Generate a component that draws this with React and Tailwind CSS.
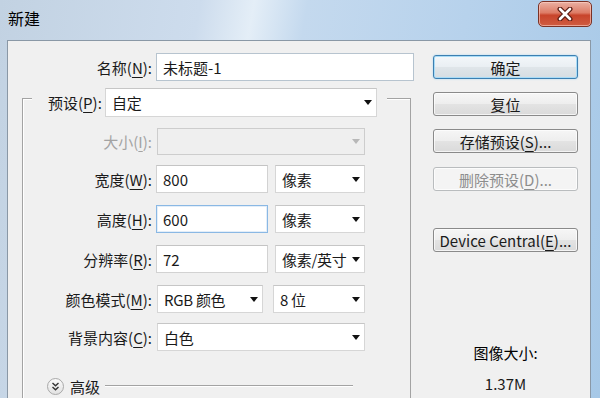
import React from "react";

const font = { fontFamily: '"Noto Sans CJK SC", "Liberation Sans", sans-serif' };

function Mn({ c }) {
  return <span className="underline underline-offset-[3px] decoration-1">{c}</span>;
}

function Arrow({ dim }) {
  return (
    <span
      className={`shrink-0 w-0 h-0 border-l-[4px] border-r-[4px] border-t-[5px] border-l-transparent border-r-transparent ${
        dim ? "border-t-[#b8b8b8]" : "border-t-[#111]"
      }`}
    />
  );
}

function Label({ children, dim, w = "w-[129px]" }) {
  return (
    <div
      className={`${w} shrink-0 text-right text-[15px] leading-none whitespace-nowrap ${
        dim ? "text-[#a3a3a3]" : "text-[#1a1a1a]"
      }`}
    >
      {children}
    </div>
  );
}

function Input({ value, w, focus, blue }) {
  return (
    <div
      className={`${w} h-full bg-white flex items-center pl-[6px] text-[15px] leading-none text-[#1a1a1a] border ${
        focus
          ? "border-[#8ab8e4] shadow-[inset_0_0_0_1px_#e3eef9]"
          : blue
          ? "border-[#b7c4cf]"
          : "border-[#d2d2d2] border-t-[#c4c4c4]"
      }`}
    >
      {value}
    </div>
  );
}

function Select({ value, w, dim }) {
  return (
    <div
      className={`${w} h-full flex items-center justify-between pl-[6px] pr-[4px] text-[15px] leading-none border ${
        dim
          ? "bg-[#efefef] border-[#cdcdcd] text-[#a3a3a3]"
          : "bg-white border-[#d6d6d6] border-t-[#c6c6c6] text-[#1a1a1a]"
      }`}
    >
      <span className="whitespace-nowrap tracking-[-0.3px]">{value}</span>
      <Arrow dim={dim} />
    </div>
  );
}

function Button({ children, primary, disabled, mt }) {
  let look =
    "border-[#8a8a8a] bg-[linear-gradient(180deg,#f6f6f6_0%,#eeeeee_48%,#e3e3e3_52%,#dadada_100%)] text-[#1a1a1a]";
  if (primary)
    look =
      "border-[#3c7fb1] bg-[linear-gradient(180deg,#f3f7fa_0%,#eaeff3_48%,#dfe5e9_52%,#d6dde2_100%)] text-[#1a1a1a] shadow-[inset_0_0_0_1px_#a9dcf7,0_0_2px_#9fd3f3]";
  if (disabled) look = "border-[#b9bcbe] bg-[#f4f4f4] text-[#8d8d8d]";
  return (
    <div
      className={`${mt} w-[145px] h-[24px] rounded-[3px] border flex items-center justify-center text-[15px] leading-none whitespace-nowrap ${
        primary ? "" : "shadow-[inset_0_0_0_1px_rgba(255,255,255,0.7)]"
      } ${look}`}
    >
      {children}
    </div>
  );
}

function Row({ mt, h = "h-[28px]", children }) {
  return <div className={`${mt} ${h} flex items-center`}>{children}</div>;
}

export default function App() {
  return (
    <div
      style={font}
      className="w-[600px] h-[398px] overflow-hidden flex flex-col bg-[linear-gradient(100deg,#c2d2e2_0%,#cddced_30%,#e4eef7_38%,#c4d9ee_46%,#b7d2ec_70%,#a6c8e7_100%)]"
    >
      {/* title bar */}
      <div className="h-[40px] shrink-0 flex items-start justify-between">
        <div className="pl-[8px] pt-[10px] text-[16px] leading-none text-black">新建</div>
        <div className="mr-[8px] mt-[1px] w-[54px] h-[26px] rounded-[5px] border border-[#7a3226] bg-[linear-gradient(180deg,#eab0a3_0%,#dd7c66_45%,#c8442b_55%,#cf5c41_100%)] shadow-[inset_0_0_0_1px_rgba(255,210,200,0.6)] flex items-center justify-center">
          <svg width="16" height="14" viewBox="0 0 16 14">
            <path d="M3 2 L13 12 M13 2 L3 12" stroke="#5a1b12" strokeWidth="5" strokeLinecap="round" />
            <path d="M3 2 L13 12 M13 2 L3 12" stroke="#ffffff" strokeWidth="2.6" strokeLinecap="round" />
          </svg>
        </div>
      </div>

      {/* content */}
      <div className="flex-1 ml-[7px] w-[584px] bg-[#f0f0f0] border-t border-l border-r border-[#8a98a6] flex">
        {/* left column */}
        <div className="w-[412px] shrink-0 flex flex-col">
          <Row mt="mt-[12px]">
            <Label w="w-[144px]">
              名称(<Mn c="N" />):
            </Label>
            <div className="ml-[4px] h-full">
              <Input value="未标题-1" w="w-[258px]" blue />
            </div>
          </Row>

          {/* group box */}
          <div className="mt-[17px] ml-[14px] w-[389px] h-[320px] border-l border-t border-r border-[#a3a3a3] shadow-[inset_1px_1px_0_#ffffff] flex flex-col">
            <div className="-mt-[11px] h-[29px] flex">
              <div className="ml-[9px] pl-[16px] pr-[10px] bg-[#f0f0f0] h-full flex items-center">
                <div className="w-[52px] text-[15px] leading-none whitespace-nowrap text-[#1a1a1a]">
                  预设(<Mn c="P" />):
                </div>
                <div className="ml-[5px] h-full">
                  <Select value="自定" w="w-[272px]" />
                </div>
              </div>
            </div>

            <Row mt="mt-[11px]" h="h-[27px]">
              <Label dim>
                大小(<Mn c="I" />):
              </Label>
              <div className="ml-[5px] h-full">
                <Select value="" w="w-[208px]" dim />
              </div>
            </Row>

            <Row mt="mt-[10px]">
              <Label>
                宽度(<Mn c="W" />):
              </Label>
              <div className="ml-[4px] h-full">
                <Input value="800" w="w-[112px]" />
              </div>
              <div className="ml-[7px] h-full">
                <Select value="像素" w="w-[90px]" />
              </div>
            </Row>

            <Row mt="mt-[12px]">
              <Label>
                高度(<Mn c="H" />):
              </Label>
              <div className="ml-[4px] h-full">
                <Input value="600" w="w-[112px]" focus />
              </div>
              <div className="ml-[7px] h-full">
                <Select value="像素" w="w-[90px]" />
              </div>
            </Row>

            <Row mt="mt-[12px]">
              <Label>
                分辨率(<Mn c="R" />):
              </Label>
              <div className="ml-[4px] h-full">
                <Input value="72" w="w-[112px]" />
              </div>
              <div className="ml-[7px] h-full">
                <Select value="像素/英寸" w="w-[90px]" />
              </div>
            </Row>

            <Row mt="mt-[12px]">
              <Label>
                颜色模式(<Mn c="M" />):
              </Label>
              <div className="ml-[5px] h-full">
                <Select value="RGB 颜色" w="w-[106px]" />
              </div>
              <div className="ml-[10px] h-full">
                <Select value="8 位" w="w-[92px]" />
              </div>
            </Row>

            <Row mt="mt-[10px]">
              <Label>
                背景内容(<Mn c="C" />):
              </Label>
              <div className="ml-[5px] h-full">
                <Select value="白色" w="w-[208px]" />
              </div>
            </Row>

            <div className="mt-[26px] h-[18px] flex items-center">
              <div className="ml-[24px] w-[17px] h-[17px] rounded-full border border-[#a9a9a9] bg-[linear-gradient(180deg,#fafafa,#e2e2e2)] flex items-center justify-center">
                <svg width="9" height="9" viewBox="0 0 9 9">
                  <path d="M1.5 1 L4.5 3.8 L7.5 1 M1.5 5 L4.5 7.8 L7.5 5" fill="none" stroke="#333" strokeWidth="1.4" />
                </svg>
              </div>
              <div className="ml-[6px] text-[15px] leading-none text-[#1a1a1a]">高级</div>
              <div className="ml-[5px] w-[248px] h-[2px] border-t border-[#a3a3a3] border-b border-b-white" />
            </div>
          </div>
        </div>

        {/* right column */}
        <div className="ml-[13px] w-[145px] flex flex-col items-center">
          <Button primary mt="mt-[14px]">确定</Button>
          <Button mt="mt-[13px]">复位</Button>
          <Button mt="mt-[13px]">
            存储预设(<Mn c="S" />)...
          </Button>
          <Button disabled mt="mt-[14px]">
            删除预设(<Mn c="D" />)...
          </Button>
          <Button mt="mt-[37px]">
            Device Central(<Mn c="E" />)...
          </Button>
          <div className="mt-[90px] h-[20px] flex items-center text-[15px] leading-none text-black">
            图像大小:
          </div>
          <div className="mt-[11px] h-[20px] flex items-center text-[15px] leading-none text-[#1a1a1a]">
            1.37M
          </div>
        </div>
      </div>
    </div>
  );
}
